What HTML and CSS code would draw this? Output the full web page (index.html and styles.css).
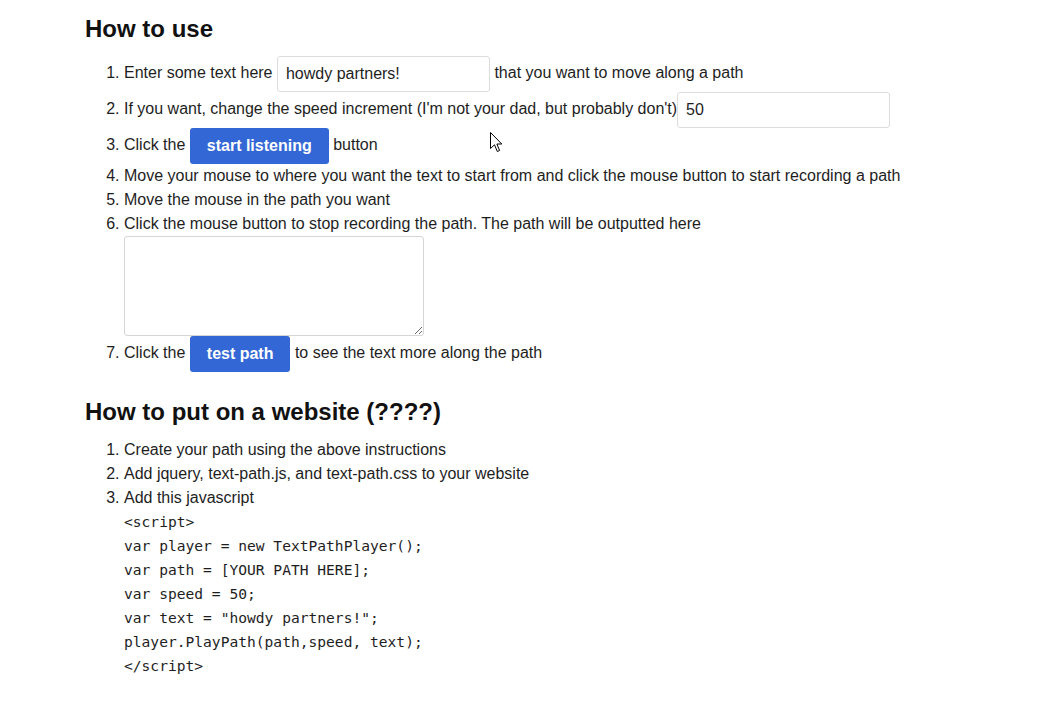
FILE: index.html
```html
<!DOCTYPE html>
<html>
<head>
<meta charset="utf-8">
<title>Text path</title>
<link rel="stylesheet" href="styles.css">
</head>
<body>
<main class="page">
  <h2 class="title title-first">How to use</h2>
  <ol class="steps">
    <li>Enter some text here <input class="field" type="text" value="howdy partners!"> that you want to move along a path</li>
    <li>If you want, change the speed increment (I'm not your dad, but probably don't)<input class="field" type="text" value="50"></li>
    <li>Click the <button class="btn">start listening</button> button</li>
    <li>Move your mouse to where you want the text to start from and click the mouse button to start recording a path</li>
    <li>Move the mouse in the path you want</li>
    <li>Click the mouse button to stop recording the path. The path will be outputted here
      <textarea class="output"></textarea>
    </li>
    <li>Click the <button class="btn">test path</button> to see the text more along the path</li>
  </ol>
  <h2 class="title">How to put on a website (????)</h2>
  <ol class="steps">
    <li>Create your path using the above instructions</li>
    <li>Add jquery, text-path.js, and text-path.css to your website</li>
    <li>Add this javascript
<pre class="code">&lt;script&gt;
var player = new TextPathPlayer();
var path = [YOUR PATH HERE];
var speed = 50;
var text = "howdy partners!";
player.PlayPath(path,speed, text);
&lt;/script&gt;</pre>
    </li>
  </ol>
</main>
<svg class="cursor" width="13" height="21" viewBox="0 0 13 21" aria-hidden="true">
  <path d="M0.5 0.5 L0.5 16.5 L4.5 12.8 L7.3 19.5 L9.6 18.5 L6.9 12 L11.8 12 Z" fill="#fff" stroke="#000" stroke-width="1" stroke-linejoin="miter"/>
</svg>
</body>
</html>
```
FILE: styles.css
```css
html, body {
  margin: 0;
  padding: 0;
  background: #ffffff;
}

body {
  font-family: "Liberation Sans", Arial, sans-serif;
  font-size: 16px;
  line-height: 24px;
  color: #1e1e1e;
  position: relative;
  min-height: 725px;
}

.page {
  padding: 14px 0 0 85px;
}

.title {
  margin: 0 0 11px 0;
  font-size: 24px;
  line-height: 30px;
  font-weight: bold;
  color: #111111;
}

.title-first {
  margin-bottom: 12px;
}

.steps {
  margin: 0 0 25px 0;
  padding-left: 39px;
}

.steps li {
  line-height: 24px;
}

.field {
  box-sizing: border-box;
  width: 213px;
  height: 36px;
  margin: 0;
  padding: 0 8px;
  border: 1px solid #dddddd;
  border-radius: 3px;
  font-family: "Liberation Sans", Arial, sans-serif;
  font-size: 16px;
  color: #1e1e1e;
  background: #ffffff;
  outline: none;
  vertical-align: -1px;
}

.btn {
  box-sizing: border-box;
  height: 36px;
  margin: 0;
  padding: 0 17px;
  border: none;
  border-radius: 3px;
  background: #3367d6;
  color: #ffffff;
  font-family: "Liberation Sans", Arial, sans-serif;
  font-size: 16px;
  font-weight: bold;
  cursor: pointer;
  vertical-align: -1px;
}

.output {
  display: block;
  box-sizing: border-box;
  width: 300px;
  height: 100px;
  margin: 0;
  border: 1px solid #d6d6d6;
  border-radius: 3px;
  font-family: "Liberation Mono", monospace;
  font-size: 13px;
}

.code {
  margin: 0;
  font-family: "DejaVu Sans Mono", "Liberation Mono", monospace;
  font-size: 14.6px;
  line-height: 24px;
  color: #1e1e1e;
}

.cursor {
  position: absolute;
  left: 490px;
  top: 132px;
}
```
